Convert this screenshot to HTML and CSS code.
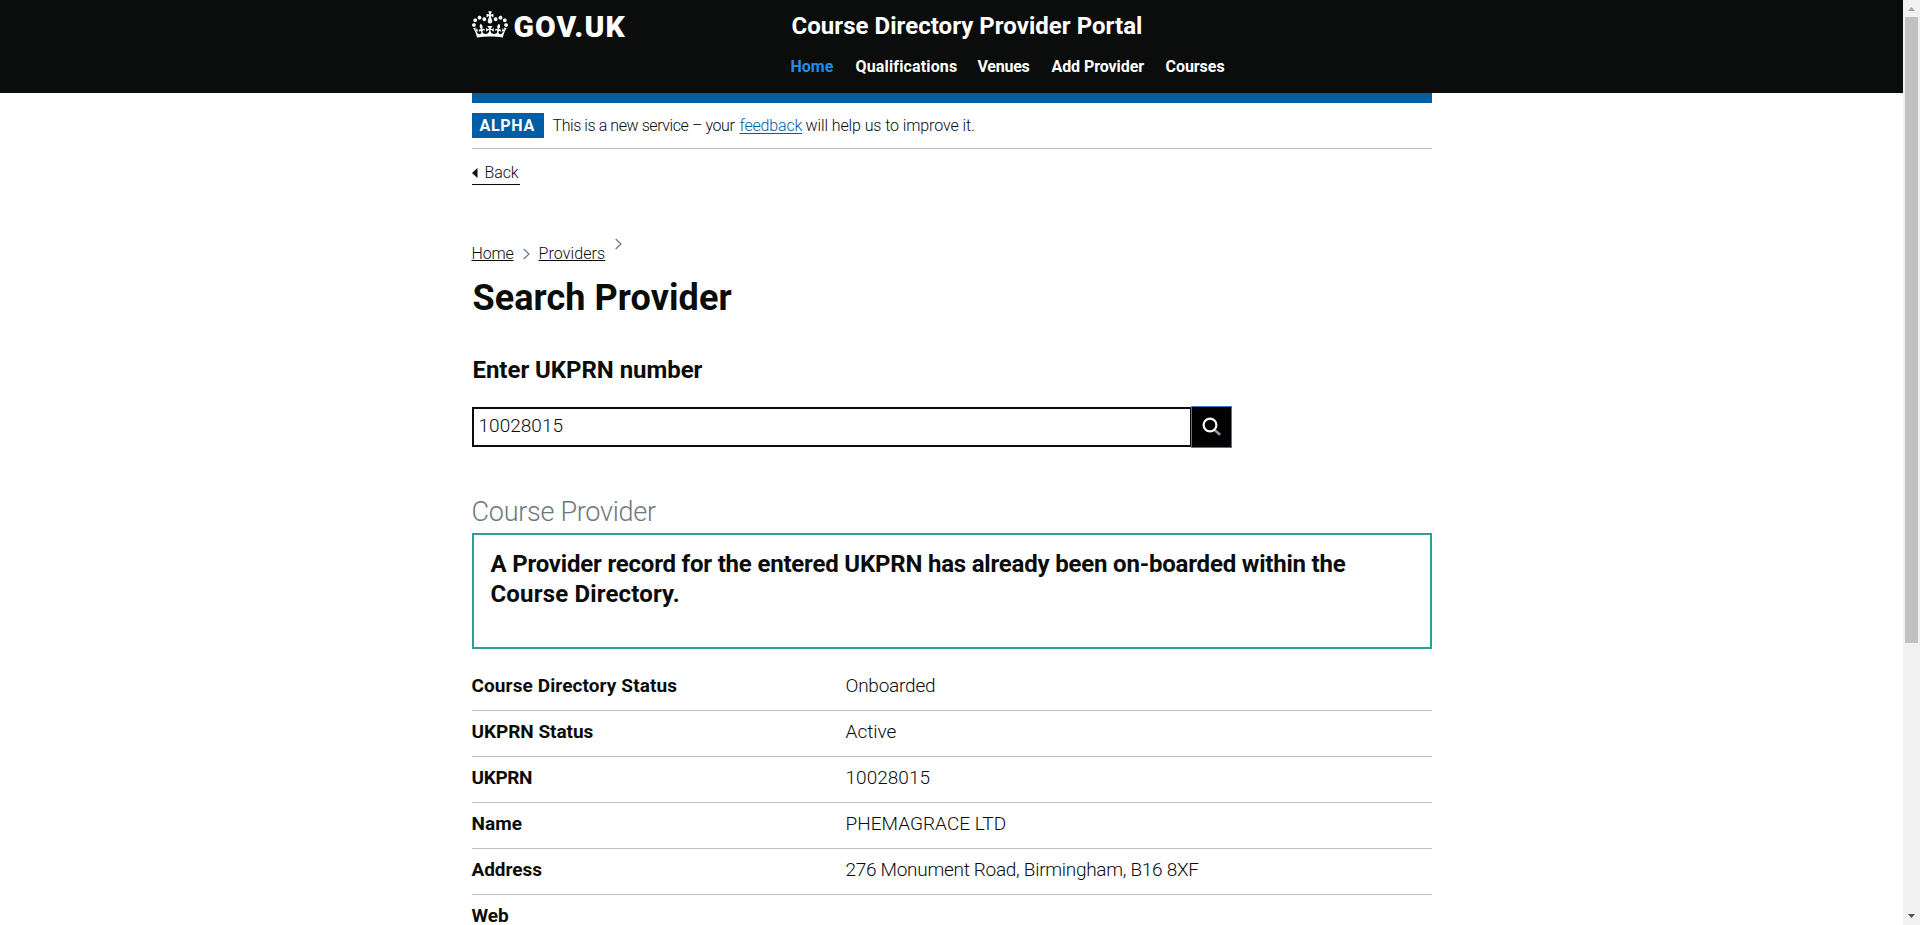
FILE: index.html
```html
<!DOCTYPE html>
<html lang="en">
<head>
<meta charset="utf-8">
<title>Course Directory Provider Portal</title>
<link rel="stylesheet" href="styles.css">
</head>
<body>
<div class="page">
  <header class="header">
    <div class="container header-inner">
      <a class="logo">
        <svg class="crown" viewBox="0 0 132 97" width="36" height="27" fill="#fff"><path fill-rule="evenodd" d="M25 30.2c3.5 1.5 7.7-.2 9.1-3.7 1.5-3.6-.2-7.8-3.9-9.2-3.6-1.4-7.6.3-9.1 3.9-1.4 3.5.3 7.5 3.9 9zM9 39.5c3.6 1.5 7.8-.2 9.2-3.7 1.5-3.6-.2-7.8-3.9-9.1-3.6-1.5-7.6.2-9.1 3.8-1.4 3.5.3 7.5 3.8 9zM4.4 57.2c3.5 1.5 7.7-.2 9.1-3.8 1.5-3.6-.2-7.7-3.9-9.1-3.5-1.5-7.6.3-9.1 3.8-1.4 3.5.3 7.6 3.9 9.1zm38.3-21.4c3.5 1.5 7.7-.2 9.1-3.8 1.5-3.6-.2-7.7-3.9-9.1-3.6-1.5-7.6.3-9.1 3.8-1.3 3.6.4 7.7 3.9 9.1zm64.4-5.6c-3.6 1.5-7.8-.2-9.1-3.7-1.5-3.6.2-7.8 3.8-9.2 3.6-1.4 7.7.3 9.2 3.9 1.3 3.5-.4 7.5-3.9 9zm15.9 9.3c-3.6 1.5-7.7-.2-9.1-3.7-1.5-3.6.2-7.8 3.7-9.1 3.6-1.5 7.7.2 9.2 3.8 1.5 3.5-.3 7.5-3.8 9zm4.7 17.7c-3.6 1.5-7.8-.2-9.2-3.8-1.5-3.6.2-7.7 3.9-9.1 3.6-1.5 7.7.3 9.2 3.8 1.3 3.5-.4 7.6-3.9 9.1zM89.3 35.8c-3.6 1.5-7.8-.2-9.2-3.8-1.4-3.6.2-7.7 3.9-9.1 3.6-1.5 7.7.3 9.2 3.8 1.4 3.6-.3 7.7-3.9 9.1zM69.7 17.7l8.9 4.7V9.3l-8.9 2.8c-.2-.3-.5-.6-.9-.9L72.4 0H59.6l3.5 11.2c-.3.3-.6.5-.9.9l-8.8-2.8v13.1l8.8-4.7c.3.3.6.7.9.9l-5 15.4v.1c-.2.8-.4 1.6-.4 2.4 0 4.1 3.1 7.5 7 8.1h.2c.3 0 .7.1 1 .1.4 0 .7 0 1-.1h.2c4-.6 7.1-4.1 7.1-8.1 0-.8-.1-1.7-.4-2.4V34l-5.1-15.4c.4-.2.7-.6 1-.9zM66 92.8c16.9 0 32.8 1.1 47.1 3.2 4-16.9 8.9-26.7 14-33.5l-9.6-3.4c1 4.9 1.1 7.2 0 10.2-1.5-1.4-3-4.3-4.2-8.7L108.6 76c2.8-2 5-3.2 7.5-3.3-4.4 9.4-10 11.9-13.6 11.2-4.3-.8-6.3-4.6-5.6-7.9 1-4.7 5.7-5.9 8-.5 4.3-8.7-3-11.4-7.6-8.8 7.1-7.2 7.9-13.5 2.1-21.1-8 6.1-8.1 12.3-4.5 20.8-4.7-5.4-12.1-2.5-9.5 6.2 3.4-5.2 7.9-2 7.2 3.1-.6 4.3-6.4 7.8-13.5 7.2-10.3-.9-10.9-8-11.2-13.8 2.5-.5 7.1 1.8 11 7.3L80.2 60c-4.1 4.4-8 5.3-12.3 5.4 1.4-4.4 8-11.6 8-11.6H55.5s6.4 7.2 7.9 11.6c-4.2-.1-8-1-12.3-5.4l1.4 16.4c3.9-5.5 8.5-7.7 10.9-7.3-.3 5.8-.9 12.8-11.1 13.8-7.2.6-12.9-2.9-13.5-7.2-.7-5 3.8-8.3 7.1-3.1 2.7-8.7-4.6-11.6-9.4-6.2 3.7-8.5 3.6-14.7-4.6-20.8-5.8 7.6-5 13.9 2.2 21.1-4.7-2.6-11.9.1-7.7 8.8 2.3-5.5 7.1-4.2 8.1.5.7 3.3-1.3 7.1-5.7 7.9-3.5.7-9-1.8-13.5-11.2 2.5.1 4.7 1.3 7.5 3.3l-4.7-15.4c-1.2 4.4-2.7 7.2-4.3 8.7-1.1-3-.9-5.3 0-10.2l-9.5 3.4c5 6.9 9.9 16.7 14 33.5 14.8-2.1 30.8-3.2 47.7-3.2z"/></svg>
        <span class="logo-text">GOV.UK</span>
      </a>
      <div class="header-content">
        <div class="service">Course Directory Provider Portal</div>
        <nav class="nav">
          <a class="nav-home">Home</a><a class="nav-quals">Qualifications</a><a class="nav-venues">Venues</a><a class="nav-add">Add Provider</a><a class="nav-courses">Courses</a>
        </nav>
      </div>
    </div>
  </header>
  <div class="container">
    <div class="blue-bar"></div>
    <div class="phase"><strong class="tag">ALPHA</strong><span class="phase-text"><span class="ph-a">This is a new service – your</span><a class="feedback">feedback</a><span class="ph-b">will help us to improve it.</span></span></div>
    <a class="back"><svg width="6" height="10" viewBox="0 0 6 10"><path d="M0 5L5.5 0v10z" fill="#0b0c0c"/></svg><span>Back</span></a>
    <div class="crumbs">
      <a class="crumb-home">Home</a>
      <svg class="chev" width="7" height="12" viewBox="0 0 7 12"><path d="M.7 1L6 6 .7 11" fill="none" stroke="#6f777b" stroke-width="1.2"/></svg>
      <a class="crumb-prov">Providers</a>
      <svg class="chev chev-up" width="7" height="12" viewBox="0 0 7 12"><path d="M.7 1L6 6 .7 11" fill="none" stroke="#6f777b" stroke-width="1.2"/></svg>
    </div>
    <h1>Search Provider</h1>
    <h2>Enter UKPRN number</h2>
    <div class="search">
      <div class="input">10028015</div>
      <button class="search-btn"><svg width="20" height="20" viewBox="0 0 20 20" fill="none"><path d="M12.8 13.2l5.4 4.6" stroke="#999" stroke-width="2.6"/><circle cx="8" cy="8" r="6.4" stroke="#fff" stroke-width="2.2"/></svg></button>
    </div>
    <div class="caption">Course Provider</div>
    <div class="notice"><div>A Provider record for the entered UKPRN has already been on-boarded within the</div><div class="notice-2">Course Directory.</div></div>
    <dl class="summary">
      <div class="row"><dt>Course Directory Status</dt><dd class="v-on">Onboarded</dd></div>
      <div class="row"><dt class="k-status">UKPRN Status</dt><dd>Active</dd></div>
      <div class="row"><dt class="k-tight">UKPRN</dt><dd class="v-num">10028015</dd></div>
      <div class="row"><dt>Name</dt><dd class="v-name">PHEMAGRACE LTD</dd></div>
      <div class="row"><dt class="k-addr">Address</dt><dd class="v-addr">276 Monument Road, Birmingham, B16 8XF</dd></div>
      <div class="row"><dt class="k-addr">Web</dt><dd></dd></div>
    </dl>
  </div>
</div>
<div class="scrollbar">
  <svg width="7" height="4" viewBox="0 0 7 4"><path d="M0 4L3.5 0 7 4z" fill="#a3a3a3"/></svg>
  <div class="thumb"></div>
  <svg class="down" width="7" height="4" viewBox="0 0 7 4"><path d="M0 0h7L3.5 4z" fill="#505050"/></svg>
</div>
</body>
</html>
```
FILE: styles.css
```css
* { box-sizing: border-box; }
body {
  margin: 0;
  height: 925px;
  display: flex;
  overflow: hidden;
  background: #fff;
  color: #0b0c0c;
  font-family: Roboto, "Liberation Sans", sans-serif;
  font-weight: 300;
  white-space: nowrap;
}
svg { display: block; flex: none; }
.page { flex: 1; height: 925px; overflow: hidden; }
.container { width: 960px; margin: 0 auto; }

.header { height: 93px; background: #0b0c0c; color: #fff; font-weight: 700; }
.header-inner { display: flex; }
.logo { width: 319px; display: flex; padding-top: 11px; }
.logo-text { font-size: 30px; line-height: 30px; margin: 1px 0 0 6px; font-weight: 900; letter-spacing: 1.1px; }
.header-content { padding-top: 11px; }
.service { padding-left: 1px; font-size: 24px; line-height: 30px; letter-spacing: .04px; }
.nav { display: flex; margin-top: 16px; font-size: 16px; line-height: 20px; }
.nav-home { color: #1d8feb; width: 64px; letter-spacing: 0; }
.nav-quals { padding-left: 1px; width: 123px; letter-spacing: .15px; }
.nav-venues { width: 74px; letter-spacing: -.25px; }
.nav-add { width: 114px; letter-spacing: -.08px; }
.nav-courses { letter-spacing: -.05px; }

.blue-bar { height: 10px; background: #005ea5; }
.phase { display: flex; padding: 10px 0; border-bottom: 1px solid #bfc1c3; font-size: 16px; line-height: 25px; }
.tag { width: 72px; background: #005ea5; color: #fff; padding-left: 8px; font-weight: 700; letter-spacing: .7px; }
.phase-text { display: flex; margin-left: 9px; }
.ph-a { width: 187px; letter-spacing: -.42px; }
.feedback { width: 63px; margin-right: 3px; letter-spacing: -.18px; color: #005ea5; text-decoration: underline; text-underline-offset: 2px; }
.ph-b { letter-spacing: -.1px; }

.back { display: flex; width: 48px; height: 22px; margin-top: 14px; border-bottom: 1px solid #0b0c0c; font-size: 16px; line-height: 20px; letter-spacing: -.1px; }
.back svg { margin: 5px 7px 0 0; }
.crumbs { display: flex; height: 20px; margin-top: 59px; font-size: 16px; line-height: 20px; }
.crumbs a { text-decoration: underline; text-underline-offset: 1px; text-decoration-thickness: 1px; }
.crumb-home { width: 42px; letter-spacing: -.2px; }
.chev { margin: 4px 9px 0 9px; }
.crumb-prov { width: 67px; letter-spacing: .1px; }
.chev-up { margin-top: -6px; }

h1 { margin: 14px 0 0; padding-left: 1px; font-size: 36px; line-height: 40px; letter-spacing: .07px; }
h2 { margin: 37px 0 0; padding-left: 1px; font-size: 24px; line-height: 30px; letter-spacing: -.04px; }
.search { display: flex; margin-top: 22px; height: 40px; }
.input { width: 720px; border: 2px solid #0b0c0c; padding-left: 5px; font-size: 19px; line-height: 34px; letter-spacing: .03px; }
.search-btn { display: flex; align-items: center; width: 41px; height: 42px; margin: -1px 0 0 -1px; padding: 0 0 0 10px; background: #000; border: 1px solid #4674c9; }
.caption { margin-top: 50px; font-size: 27px; line-height: 30px; letter-spacing: -.27px; color: #6f777b; }
.notice { margin-top: 6px; height: 116px; border: 2px solid #28a197; padding: 14px 0 0 17px; font-size: 24px; line-height: 30px; font-weight: 700; letter-spacing: -.2px; }
.notice-2 { letter-spacing: .17px; }

.summary { margin: 16px 0 0; font-size: 19px; line-height: 25px; }
.row { display: flex; height: 46px; padding-top: 8px; border-bottom: 1px solid #bfc1c3; }
dt { width: 374px; font-weight: 700; letter-spacing: .1px; }
dd { margin: 0; letter-spacing: 0; }
.k-status { letter-spacing: -.04px; }
.k-tight { letter-spacing: -.35px; }
.k-addr { letter-spacing: -.05px; }
.v-on { letter-spacing: -.22px; }
.v-num { letter-spacing: .03px; }
.v-name { letter-spacing: .03px; }
.v-addr { letter-spacing: -.29px; }

.scrollbar { width: 17px; height: 925px; background: #f1f1f1; display: flex; flex-direction: column; align-items: center; padding-top: 7px; }
.thumb { width: 13px; height: 626px; margin-top: 6px; background: #c1c1c1; }
.down { margin-top: 271px; }
```
